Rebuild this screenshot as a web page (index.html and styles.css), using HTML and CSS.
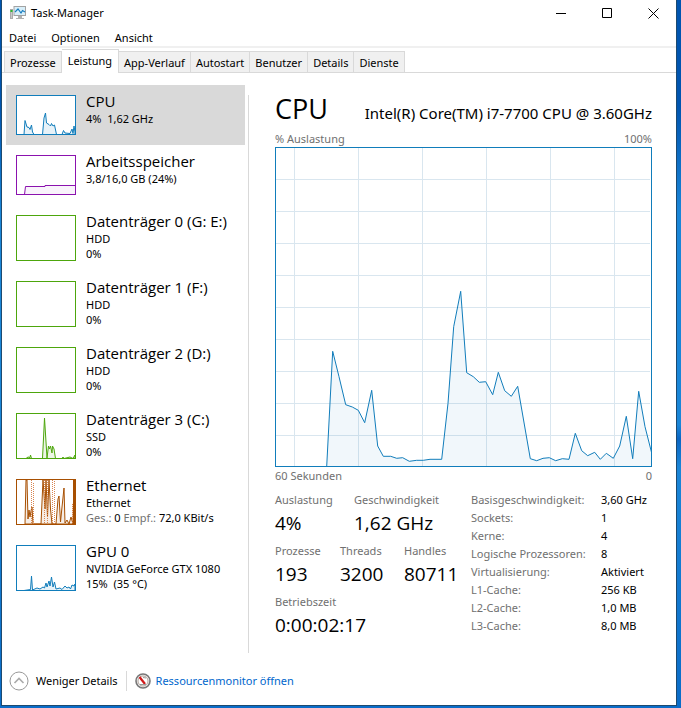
FILE: index.html
```html
<!DOCTYPE html>
<html lang="de">
<head>
<meta charset="utf-8">
<title>Task-Manager</title>
<link rel="stylesheet" href="styles.css">
</head>
<body>
<div class="window">
  <header class="titlebar">
    <svg class="app-icon" viewBox="0 0 16 14" aria-hidden="true">
      <rect x="0.5" y="3.5" width="2" height="9" fill="#c9c9c9" stroke="#aaa"/>
      <path d="M0.500 5h2" stroke="#2dbb2d" stroke-width="2"/>
      <rect x="4" y="0.5" width="11.500" height="9" fill="#d8effa" stroke="#a3a3a3"/>
      <path d="M5 6 L8 3 L11 7 L12.500 4.500 L15 6" fill="none" stroke="#1b7fc0" stroke-width="1.200"/>
      <path d="M8 10h4v2h2v1H6v-1h2z" fill="#b0b0b0"/>
    </svg>
    <span class="title">Task-Manager</span>
    <div class="controls">
      <button type="button" aria-label="Minimieren"><svg viewBox="0 0 11 11"><path d="M0 5.500h10"/></svg></button>
      <button type="button" aria-label="Maximieren"><svg viewBox="0 0 11 11"><path d="M0.500 0.500h9v9h-9z"/></svg></button>
      <button type="button" aria-label="Schließen"><svg viewBox="0 0 11 11"><path d="M0.500 0.500l10 10M10.500 0.500l-10 10"/></svg></button>
    </div>
  </header>
  <nav class="menu">
    <button type="button">Datei</button>
    <button type="button">Optionen</button>
    <button type="button">Ansicht</button>
  </nav>
  <div class="tabs" role="tablist">
    <button type="button" role="tab">Prozesse</button>
    <button type="button" role="tab" class="active" aria-selected="true">Leistung</button>
    <button type="button" role="tab">App-Verlauf</button>
    <button type="button" role="tab">Autostart</button>
    <button type="button" role="tab">Benutzer</button>
    <button type="button" role="tab">Details</button>
    <button type="button" role="tab">Dienste</button>
  </div>
  <main class="content">
    <aside class="sidebar">
      <button type="button" class="item selected">
        <svg class="thumb short blue" viewBox="0 0 60 40" aria-hidden="true">
          <rect class="frame" x="0.5" y="0.5" width="59" height="39"/>
          <path class="plot" d="M8 39.500 L9 25.500 L11 32 L13 32.500 L14 34.500 L15.500 30 L16.500 37 L18 39.500 L26.500 39.500 L28 23 L29.500 18 L30.500 28 L33 29.500 L34.500 31 L35.500 28.500 L37 31 L38.500 30 L40.500 39.500 L46 39.500 L47.500 35.500 L49 38 L54 38.500 L56 34 L57 38.500 L58 31 L59 37 V39.500 Z"/>
        </svg>
        <span class="text"><span class="name">CPU</span><span>4%&nbsp; 1,62 GHz</span></span>
      </button>
      <button type="button" class="item">
        <svg class="thumb short purple" viewBox="0 0 60 40" aria-hidden="true">
          <rect class="frame" x="0.5" y="0.5" width="59" height="39"/>
          <path class="plot" d="M8.500 39.500 L9.500 31.500 H29 V30.500 H59.500 V39.500 Z"/>
        </svg>
        <span class="text"><span class="name">Arbeitsspeicher</span><span>3,8/16,0 GB (24%)</span></span>
      </button>
      <button type="button" class="item">
        <svg class="thumb green" viewBox="0 0 60 46" aria-hidden="true"><rect class="frame" x="0.5" y="0.5" width="59" height="45"/></svg>
        <span class="text"><span class="name">Datenträger 0 (G: E:)</span><span>HDD</span><span>0%</span></span>
      </button>
      <button type="button" class="item">
        <svg class="thumb green" viewBox="0 0 60 46" aria-hidden="true"><rect class="frame" x="0.5" y="0.5" width="59" height="45"/></svg>
        <span class="text"><span class="name">Datenträger 1 (F:)</span><span>HDD</span><span>0%</span></span>
      </button>
      <button type="button" class="item">
        <svg class="thumb green" viewBox="0 0 60 46" aria-hidden="true"><rect class="frame" x="0.5" y="0.5" width="59" height="45"/></svg>
        <span class="text"><span class="name">Datenträger 2 (D:)</span><span>HDD</span><span>0%</span></span>
      </button>
      <button type="button" class="item">
        <svg class="thumb green" viewBox="0 0 60 46" aria-hidden="true">
          <rect class="frame" x="0.5" y="0.5" width="59" height="45"/>
          <path class="plot" d="M10 45.500 L12 44 L14 44.500 L14.500 42 L15.500 45.500 L26.500 45.500 L28.500 5 L31 45 L32.500 33 L33.500 36 L34.500 33 L36 40 L36.500 33 L38 36 L39.500 45.500 L46 45.500 L47 44 L48 45.500 L54 44 L57 45.500 L59 42 V45.500 Z"/>
        </svg>
        <span class="text"><span class="name">Datenträger 3 (C:)</span><span>SSD</span><span>0%</span></span>
      </button>
      <button type="button" class="item">
        <svg class="thumb brown" viewBox="0 0 60 46" aria-hidden="true">
          <rect class="frame" x="0.5" y="0.5" width="59" height="45"/>
          <path class="plot" d="M9 45 L10 1 L11 1 L12 40 L13 31 L14 38 L15 32 L16 28 L17 45 L25 45 L27 1 L29 30 L30 1 L31.500 38 L33 1 L34.500 30 L36 45 L40 45 L42 20 L43 17 L44.500 43 L46 28 L48 9 L49 44 L51 41 L53 45 L55 38 L57 45 L58 1 V45 Z"/>
          <path class="dotted" d="M15.500 1V45M17.500 4V45M28.500 1V45M31.500 1V45M36.500 1V45M38.500 2V45M56.500 25V45"/>
          <path d="M58 1v44" stroke="#a74f01" stroke-width="2"/>
        </svg>
        <span class="text"><span class="name">Ethernet</span><span>Ethernet</span><span><span class="muted">Ges.:</span> 0 <span class="muted">Empf.:</span> 72,0 KBit/s</span></span>
      </button>
      <button type="button" class="item">
        <svg class="thumb blue" viewBox="0 0 60 46" aria-hidden="true">
          <rect class="frame" x="0.5" y="0.5" width="59" height="45"/>
          <path class="plot" d="M8 45.500 L14.500 44.500 L15.500 31 L16.500 45 L21 43 L24 44 L27 42 L28.500 43 L30 38 L31 42 L33 36 L34 41 L35.500 32 L37 42 L38.500 37 L40 44 L44 43 L46 44.500 L49 41 L51 43 L53 42 L54.500 44 L56 40 L58 41 L59 39 V45.500 Z"/>
        </svg>
        <span class="text"><span class="name">GPU 0</span><span>NVIDIA GeForce GTX 1080</span><span>15%&nbsp; (35 °C)</span></span>
      </button>
    </aside>
    <div class="divider"></div>
    <section class="detail">
      <div class="heading">
        <h1>CPU</h1>
        <h2>Intel(R) Core(TM) i7-7700 CPU @ 3.60GHz</h2>
      </div>
      <div class="axis"><span>% Auslastung</span><span>100%</span></div>
      <svg class="chart" viewBox="275 147 377 320" preserveAspectRatio="none" role="img" aria-label="% Auslastung">
        <path class="grid" d="M294.500 148V466M358.500 148V466M422.500 148V466M486.500 148V466M550.500 148V466M614.500 148V466M276 179.500H650M276 211.500H650M276 243.500H650M276 275.500H650M276 307.500H650M276 339.500H650M276 371.500H650M276 403.500H650M276 435.500H650"/>
        <path class="load" d="M326.700 466.500 L332.700 351.300 L339 376.700 L345.700 404.700 L352.300 407 L358.300 410.300 L364.700 422.700 L371.700 390.300 L377.700 446 L383.300 456.300 L390.700 456.300 L396.700 458.300 L402.700 457.700 L409.300 461.300 L416.700 460.300 L423.300 460.300 L430 459.300 L441.700 459.300 L448 403.300 L453.700 326.700 L460.700 291.300 L466.700 372.700 L473.300 376.700 L479.300 382.300 L485.700 381.700 L492.700 394.700 L498.300 372.300 L504.700 390.700 L511.300 396.300 L517.700 386.300 L530.300 458.700 L536.700 460.700 L543 458.300 L549.300 457.700 L555.700 460.700 L562.300 458.700 L569 459.300 L575.300 433.300 L581.700 450.700 L587.700 455.700 L594.700 452.300 L600.300 459.300 L606.300 453.300 L613.300 458.300 L619.700 446 L626.300 416.300 L632.700 458.700 L638.700 391.300 L645 426.700 L651.500 452.300 V466.500 Z"/>
        <rect class="border" x="275.500" y="147.500" width="376" height="319"/>
      </svg>
      <div class="axis"><span>60 Sekunden</span><span>0</span></div>
      <div class="stats">
        <div class="figures">
          <dl class="pair"><div><dt>Auslastung</dt><dd>4%</dd></div><div><dt>Geschwindigkeit</dt><dd>1,62 GHz</dd></div></dl>
          <dl class="triple"><div><dt>Prozesse</dt><dd>193</dd></div><div><dt>Threads</dt><dd>3200</dd></div><div><dt>Handles</dt><dd>80711</dd></div></dl>
          <dl><div><dt>Betriebszeit</dt><dd>0:00:02:17</dd></div></dl>
        </div>
        <table class="specs">
          <tr><th scope="row">Basisgeschwindigkeit:</th><td>3,60 GHz</td></tr>
          <tr><th scope="row">Sockets:</th><td>1</td></tr>
          <tr><th scope="row">Kerne:</th><td>4</td></tr>
          <tr><th scope="row">Logische Prozessoren:</th><td>8</td></tr>
          <tr><th scope="row">Virtualisierung:</th><td>Aktiviert</td></tr>
          <tr><th scope="row">L1-Cache:</th><td>256 KB</td></tr>
          <tr><th scope="row">L2-Cache:</th><td>1,0 MB</td></tr>
          <tr><th scope="row">L3-Cache:</th><td>8,0 MB</td></tr>
        </table>
      </div>
    </section>
  </main>
  <footer class="footer">
    <button type="button" class="less">
      <svg class="chevron" viewBox="0 0 20 20" aria-hidden="true"><circle cx="10" cy="10" r="9" fill="#fff" stroke="#999"/><path d="M5.500 12L10 7.500L14.500 12" fill="none" stroke="#aaa" stroke-width="1.600"/></svg>
      Weniger Details
    </button>
    <a href="#">
      <svg class="gauge" viewBox="0 0 16 16" aria-hidden="true"><circle cx="8" cy="8" r="7" fill="#eee" stroke="#777" stroke-width="1.600"/><circle cx="8" cy="8" r="5" fill="#fff" stroke="#b5a59c"/><path d="M4.500 4L10 11" stroke="#d01818" stroke-width="2.200"/><path d="M8 4.500L11 5M5 11.500H11" stroke="#999" fill="none"/></svg>
      Ressourcenmonitor öffnen
    </a>
  </footer>
</div>
</body>
</html>
```
FILE: styles.css
```css
* { box-sizing: border-box; }
html { height: 100%; }
body {
  margin: 0;
  min-height: 100%;
  display: flex;
  padding: 0 4px 2px 1px;
  background: linear-gradient(#0055b0 0, #0055b0 15%, #1a86d8 30%, #1a86d8 60%, #0a66c4 62%, #1a86d8 66%, #0a6cc8 100%);
  color: #000;
  font: 11px/16px "Noto Sans", "Open Sans", sans-serif;
}
button { font: inherit; color: inherit; border: 0; background: none; padding: 0; margin: 0; text-align: left; white-space: nowrap; }
.window { flex: 1; min-width: 0; display: flex; flex-direction: column; background: #fff; border: 1px solid #1d4a70; border-top: 0; }

.titlebar { display: flex; align-items: center; height: 26px; padding-left: 8px; gap: 5px; }
.app-icon { width: 16px; height: 14px; }
.controls { margin-left: auto; display: flex; align-self: stretch; }
.controls button { width: 46px; display: flex; align-items: center; justify-content: center; }
.controls svg { width: 11px; height: 11px; fill: none; stroke: #000; }

.menu { display: flex; gap: 15px; height: 22px; padding: 4px 7px 0; border-bottom: 2px solid #f0f0f0; }

.tabs { display: flex; align-items: flex-end; height: 25px; padding-left: 2px; border-bottom: 1px solid #d9d9d9; }
.tabs button { height: 21px; padding: 1px 5px 0; background: #f0f0f0; border: 1px solid #d9d9d9; border-width: 1px 1px 0 0; }
.tabs button:first-child { border-left-width: 1px; }
.tabs .active { height: 24px; margin-bottom: -1px; padding: 0 6px 2px; background: #fff; }

.content { flex: 1; display: flex; padding: 12px 24px 0 4px; }
.sidebar { flex: none; width: 242px; }
.divider { flex: none; width: 1px; margin: 10px 0 2px; background: #d9d9d9; }
.item { display: flex; gap: 10px; width: 239px; padding: 10px; }
.selected { background: #d9d9d9; }
.thumb { flex: none; width: 60px; height: 46px; background: #fff; }
.short { height: 40px; }
.thumb .frame { fill: none; stroke: currentColor; }
.thumb .plot { stroke: currentColor; stroke-width: 1; fill: currentColor; fill-opacity: 0.1; }
.thumb .dotted { stroke: #d98550; stroke-dasharray: 1 1; }
.blue { color: #117dbb; }
.purple { color: #8b12ae; }
.purple .plot { fill-opacity: 0.05; }
.green { color: #4da60c; }
.brown { color: #a74f01; }
.text { display: flex; flex-direction: column; line-height: 15px; margin: -4px 0; }
.name { font: 15px/20px "Open Sans", "Noto Sans", sans-serif; }
.muted { color: #707070; }

.detail { flex: 1; min-width: 0; padding-left: 26px; }
.heading { display: flex; justify-content: space-between; align-items: baseline; height: 45px; }
h1, h2 { margin: 0; font-weight: 400; white-space: nowrap; }
h1 { font: 27px/48px "Open Sans", "Noto Sans", sans-serif; }
h2 { font-size: 15px; }
.axis { display: flex; justify-content: space-between; color: #707070; line-height: 17px; }
.chart { display: block; width: 100%; height: 320px; }
.chart .grid { stroke: #d9e6ef; fill: none; }
.chart .load { stroke: #117dbb; fill: #117dbb; fill-opacity: 0.06; }
.chart .border { stroke: #117dbb; fill: none; }
.stats { display: flex; margin-top: 7px; }
.figures { width: 196px; flex: none; }
dl { margin: 0; display: grid; height: 51px; }
dl.pair { grid-template-columns: 79px 1fr; }
dl.triple { grid-template-columns: 65px 64px 1fr; }
dt { color: #707070; line-height: 18px; }
dd { margin: 0; font: 19px/29px "Open Sans", "Noto Sans", sans-serif; white-space: nowrap; }
.specs { border-collapse: collapse; align-self: flex-start; }
.specs th, .specs td { padding: 0; height: 18px; line-height: 18px; white-space: nowrap; text-align: left; font-weight: 400; }
.specs th { width: 130px; color: #707070; }

.footer { display: flex; align-items: center; height: 50px; padding: 1px 0 0 7px; }
.footer button, .footer a { display: flex; align-items: center; white-space: nowrap; }
.less { gap: 7px; padding-right: 8px; border-right: 1px solid #d9d9d9; }
.chevron { width: 20px; height: 20px; }
.gauge { width: 16px; height: 16px; }
.footer a { gap: 5px; padding-left: 8px; color: #0066cc; text-decoration: none; }
```
